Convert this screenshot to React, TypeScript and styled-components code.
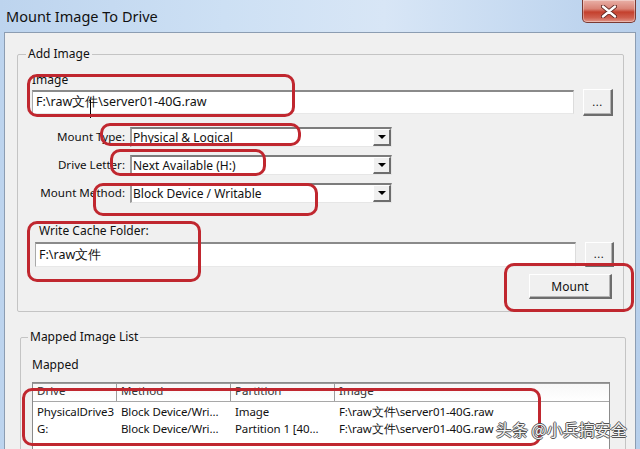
import React from "react";
import styled, { createGlobalStyle } from "styled-components";

const Global = createGlobalStyle`
  html, body { margin: 0; padding: 0; }
  body {
    width: 640px; height: 449px; overflow: hidden;
    background: #c4d9f0;
    font-family: "Noto Sans", "Liberation Sans", sans-serif;
  }
`;

const Window = styled.div`
  position: relative;
  width: 640px;
  height: 449px;
  overflow: hidden;
  display: flex;
  flex-direction: column;
  background: linear-gradient(90deg, #bdd4ee 0%, #cde0f4 35%, #d8e6f6 60%, #c3d8f0 85%, #b7cfeb 100%);
`;

const TitleBar = styled.div`
  height: 32px;
  flex: none;
  display: flex;
  align-items: flex-start;
  justify-content: space-between;
  padding: 0 4px 0 6px;
`;

const Title = styled.div`
  font-size: 14.5px;
  line-height: 20px;
  margin-top: 6px;
  color: #111;
`;

const CloseButton = styled.div`
  width: 54px;
  height: 23px;
  box-sizing: border-box;
  border: 1px solid #7a3a33;
  border-top: none;
  border-radius: 0 0 5px 5px;
  background: linear-gradient(180deg, #e9b1a8 0%, #d98376 40%, #c4402d 55%, #cf5f4e 80%, #e1978a 100%);
  box-shadow: inset 0 0 0 1px rgba(255, 255, 255, 0.35);
  display: flex;
  align-items: center;
  justify-content: center;
`;

const Client = styled.div`
  flex: 1;
  margin: 0 4px 0 4px;
  background: #f0f0f0;
  border: 1px solid #8c9db2;
  border-bottom: none;
  padding: 13px 11px 0 12px;
  display: flex;
  flex-direction: column;
  min-height: 0;
`;

const GroupBox = styled.fieldset<{ $second?: boolean }>`
  margin: ${(p) => (p.$second ? "17px -2px 0 3px" : "0")};
  padding: 0;
  border: 1px solid #c4c4c4;
  border-radius: 2px;
  min-width: 0;
  display: flex;
  flex-direction: column;
`;

const Legend = styled.legend<{ $indent: number }>`
  margin-left: ${(p) => p.$indent}px;
  padding: 0 2px;
  font-size: 12px;
  line-height: 16px;
  color: #111;
`;

const AddBody = styled.div`
  display: flex;
  flex-direction: column;
  padding: 0 10px 12px 14px;
`;

const Label = styled.div<{ $top: number; $left?: number }>`
  font-size: 12px;
  line-height: 15px;
  color: #111;
  margin-top: ${(p) => p.$top}px;
  margin-left: ${(p) => p.$left ?? 0}px;
`;

const PathRow = styled.div<{ $top: number; $left?: number; $right?: number }>`
  display: flex;
  align-items: flex-start;
  gap: 9px;
  margin-top: ${(p) => p.$top}px;
  padding-left: ${(p) => p.$left ?? 0}px;
  margin-right: ${(p) => p.$right ?? 0}px;
`;

const TextBox = styled.div<{ $h: number; $offset?: number }>`
  flex: 1;
  height: ${(p) => p.$h}px;
  margin-top: ${(p) => p.$offset ?? 0}px;
  box-sizing: border-box;
  background: #fff;
  border-style: solid;
  border-width: 2px 1px 1px 1px;
  border-color: #8a8a8a #dcdcdc #e8e8e8 #a9a9a9;
  font-size: 12.5px;
  line-height: ${(p) => p.$h - 4}px;
  padding-left: 3px;
  color: #111;
  white-space: nowrap;
  overflow: hidden;
`;

const PushButton = styled.div<{ $w: number; $h: number }>`
  width: ${(p) => p.$w}px;
  height: ${(p) => p.$h}px;
  flex: none;
  box-sizing: border-box;
  background: #f0f0f0;
  border-style: solid;
  border-width: 1px 2px 2px 1px;
  border-color: #ffffff #6d6d6d #6d6d6d #ffffff;
  box-shadow: inset -1px -1px 0 #b4b4b4;
  display: flex;
  align-items: center;
  justify-content: center;
  font-size: 12px;
  color: #111;
`;

const Dots = styled.span`
  font-size: 11px;
  letter-spacing: 0.5px;
  margin-top: -2px;
`;

const ComboGrid = styled.div`
  display: grid;
  grid-template-columns: 93px 262px;
  grid-auto-rows: 20px;
  column-gap: 5px;
  row-gap: 8px;
  margin-top: 11px;
  align-items: center;
`;

const ComboLabel = styled.div`
  font-size: 11.6px;
  line-height: 15px;
  text-align: right;
  white-space: nowrap;
  color: #111;
  margin-top: -2px;
`;

const Combo = styled.div`
  height: 20px;
  box-sizing: border-box;
  background: #fff;
  border-style: solid;
  border-width: 2px 1px 1px 2px;
  border-color: #7c7c7c #e6e6e6 #e6e6e6 #9a9a9a;
  display: flex;
  align-items: stretch;
`;

const ComboText = styled.div`
  flex: 1;
  font-size: 12px;
  line-height: 17px;
  padding-left: 1px;
  white-space: nowrap;
  color: #111;
`;

const ComboArrow = styled.div`
  width: 18px;
  box-sizing: border-box;
  background: #f0f0f0;
  border-style: solid;
  border-width: 1px 2px 2px 1px;
  border-color: #ffffff #6d6d6d #6d6d6d #ffffff;
  display: flex;
  align-items: center;
  justify-content: center;
`;

const Triangle = styled.div`
  width: 0;
  height: 0;
  border-left: 4px solid transparent;
  border-right: 4px solid transparent;
  border-top: 4px solid #000;
`;

const MountRow = styled.div`
  display: flex;
  justify-content: flex-end;
  margin-top: 7px;
  margin-right: 1px;
`;

const ListBody = styled.div`
  display: flex;
  flex-direction: column;
  padding: 0 15px 0 11px;
`;

const ListView = styled.div`
  margin-top: 10px;
  background: #fff;
  border: 1px solid #8b8b8b;
  border-bottom: none;
  height: 80px;
`;

const cols = "84px 114px 104px 1fr";

const HeaderRow = styled.div`
  display: grid;
  grid-template-columns: ${cols};
  height: 17px;
  border-top: 1px solid #9a9a9a;
  border-bottom: 1px solid #a8a8a8;
  background: linear-gradient(180deg, #f7f7f7, #ffffff);
`;

const HeaderCell = styled.div`
  border-right: 1px solid #9d9d9d;
  font-size: 11.5px;
  line-height: 14px;
  padding-left: 4px;
  color: #333;
  &:last-child { border-right: none; }
`;

const DataRows = styled.div`
  padding-top: 2px;
`;

const DataRow = styled.div`
  display: grid;
  grid-template-columns: ${cols};
  height: 16.5px;
  font-size: 11.5px;
  letter-spacing: -0.1px;
  line-height: 16px;
  color: #111;
`;

const DataCell = styled.div`
  padding-left: 4px;
  white-space: nowrap;
  overflow: hidden;
`;

const Annot = styled.div<{ $x: number; $y: number; $w: number; $h: number }>`
  position: absolute;
  left: ${(p) => p.$x}px;
  top: ${(p) => p.$y}px;
  width: ${(p) => p.$w}px;
  height: ${(p) => p.$h}px;
  box-sizing: border-box;
  border: 3px solid #c0272f;
  border-radius: 10px;
  pointer-events: none;
`;

const Cursor = styled.div`
  position: absolute;
  left: 90px;
  top: 100px;
  width: 1px;
  height: 18px;
  background: #000;
`;

const Watermark = styled.div`
  position: absolute;
  left: 496px;
  top: 418px;
  font-family: "Noto Sans CJK SC", "Noto Sans", sans-serif;
  font-size: 16px;
  line-height: 22px;
  color: #f4f4f4;
  white-space: nowrap;
  text-shadow: 1px 0 0 #555, -1px 0 0 #555, 0 1px 0 #555, 0 -1px 0 #555;
`;

const annotations = [
  { x: 27, y: 74, w: 268, h: 43 },
  { x: 100, y: 123, w: 201, h: 23 },
  { x: 110, y: 149, w: 156, h: 27 },
  { x: 93, y: 183, w: 225, h: 33 },
  { x: 27, y: 221, w: 174, h: 61 },
  { x: 504, y: 263, w: 130, h: 49 },
  { x: 22, y: 388, w: 519, h: 58 },
];

const combos = [
  { label: "Mount Type:", value: "Physical & Logical" },
  { label: "Drive Letter:", value: "Next Available (H:)" },
  { label: "Mount Method:", value: "Block Device / Writable" },
];

const rows = [
  ["PhysicalDrive3", "Block Device/Wri...", "Image", "F:\\raw文件\\server01-40G.raw"],
  ["G:", "Block Device/Wri...", "Partition 1 [40...", "F:\\raw文件\\server01-40G.raw"],
];

export default function App() {
  return (
    <>
      <Global />
      <Window>
        <TitleBar>
          <Title>Mount Image To Drive</Title>
          <CloseButton>
            <svg width="16" height="13" viewBox="0 0 16 13">
              <path
                d="M2 1.5 L8 6.5 L14 1.5 M2 11.5 L8 6.5 L14 11.5"
                stroke="#5a2520"
                strokeWidth="4.2"
                fill="none"
                strokeLinecap="round"
              />
              <path
                d="M2 1.5 L8 6.5 L14 1.5 M2 11.5 L8 6.5 L14 11.5"
                stroke="#ffffff"
                strokeWidth="2.4"
                fill="none"
                strokeLinecap="round"
              />
            </svg>
          </CloseButton>
        </TitleBar>
        <Client>
          <GroupBox>
            <Legend $indent={8}>Add Image</Legend>
            <AddBody>
              <Label $top={10}>Image</Label>
              <PathRow $top={2}>
                <TextBox $h={24} $offset={1}>F:\raw文件\server01-40G.raw</TextBox>
                <PushButton $w={30} $h={27}>
                  <Dots>...</Dots>
                </PushButton>
              </PathRow>
              <ComboGrid>
                {combos.map((c) => (
                  <React.Fragment key={c.label}>
                    <ComboLabel>{c.label}</ComboLabel>
                    <Combo>
                      <ComboText>{c.value}</ComboText>
                      <ComboArrow>
                        <Triangle />
                      </ComboArrow>
                    </Combo>
                  </React.Fragment>
                ))}
              </ComboGrid>
              <Label $top={20} $left={7}>Write Cache Folder:</Label>
              <PathRow $top={4} $left={3} $right={-1}>
                <TextBox $h={25}>F:\raw文件</TextBox>
                <PushButton $w={29} $h={25}>
                  <Dots>...</Dots>
                </PushButton>
              </PathRow>
              <MountRow>
                <PushButton $w={83} $h={25}>Mount</PushButton>
              </MountRow>
            </AddBody>
          </GroupBox>
          <GroupBox $second>
            <Legend $indent={7}>Mapped Image List</Legend>
            <ListBody>
              <Label $top={12}>Mapped</Label>
              <ListView>
                <HeaderRow>
                  {["Drive", "Method", "Partition", "Image"].map((h) => (
                    <HeaderCell key={h}>{h}</HeaderCell>
                  ))}
                </HeaderRow>
                <DataRows>
                  {rows.map((r, i) => (
                    <DataRow key={i}>
                      {r.map((c, j) => (
                        <DataCell key={j}>{c}</DataCell>
                      ))}
                    </DataRow>
                  ))}
                </DataRows>
              </ListView>
            </ListBody>
          </GroupBox>
        </Client>
        <Cursor />
        {annotations.map((a, i) => (
          <Annot key={i} $x={a.x} $y={a.y} $w={a.w} $h={a.h} />
        ))}
        <Watermark>头条 @小兵搞安全</Watermark>
      </Window>
    </>
  );
}
